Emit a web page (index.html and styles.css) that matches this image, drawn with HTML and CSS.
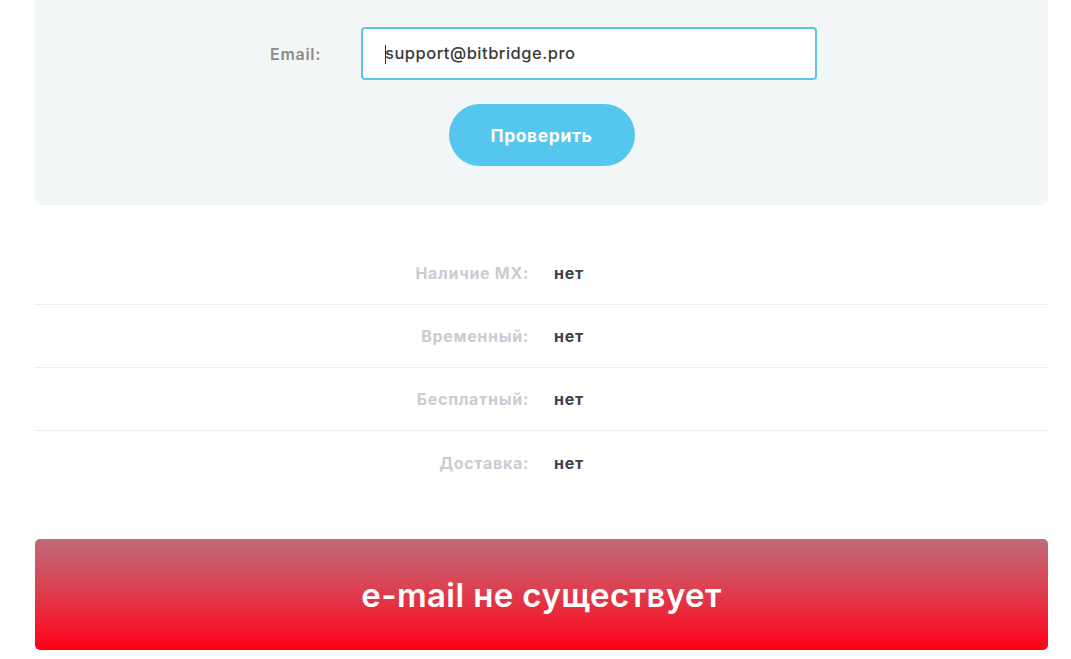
FILE: index.html
```html
<!DOCTYPE html>
<html lang="ru">
<head>
<meta charset="utf-8">
<title>Проверка email</title>
<link rel="stylesheet" href="styles.css">
</head>
<body>
<div class="page">
  <section class="panel">
    <form class="check-form">
      <div class="field">
        <label class="field-label" for="email">Email:</label>
        <div class="input-box"><span class="caret"></span><input id="email" class="field-input" type="text" value="support@bitbridge.pro"></div>
      </div>
      <button type="button" class="btn">Проверить</button>
    </form>
  </section>

  <section class="results">
    <div class="row"><span class="r-label">Наличие MX:</span><span class="r-value">нет</span></div>
    <div class="row"><span class="r-label">Временный:</span><span class="r-value">нет</span></div>
    <div class="row"><span class="r-label">Бесплатный:</span><span class="r-value">нет</span></div>
    <div class="row"><span class="r-label">Доставка:</span><span class="r-value">нет</span></div>
  </section>

  <div class="verdict">e-mail не существует</div>
</div>
</body>
</html>
```
FILE: styles.css
```css
* { box-sizing: border-box; }
html, body { margin: 0; padding: 0; background: #fff; }
body { font-family: Inter, "Open Sans", "Liberation Sans", sans-serif; }

.page {
  width: 1013px;
  margin-left: 35px;
}

.panel {
  background: #f2f6f7;
  border-radius: 0 0 7px 7px;
  height: 205px;
  padding-top: 27px;
}

.check-form {
  display: flex;
  flex-direction: column;
  align-items: center;
}

.field {
  align-self: stretch;
  display: flex;
  align-items: center;
  gap: 40px;
}

.field-label {
  width: 286px;
  text-align: right;
  color: #8c8c8c;
  font-size: 16px;
  font-weight: 600;
  letter-spacing: 0.7px;
}

.input-box {
  position: relative;
  width: 456px;
  height: 53px;
  border: 2px solid #5ec4e6;
  border-radius: 4px;
  background: #fff;
}

.field-input {
  width: 100%;
  height: 100%;
  border: 0;
  outline: none;
  background: transparent;
  padding: 0 0 2px 22px;
  font-family: inherit;
  font-size: 16.5px;
  font-weight: 500;
  letter-spacing: 0.5px;
  color: #3a3a3a;
}

.caret {
  position: absolute;
  left: 22px;
  top: 16px;
  width: 1px;
  height: 19px;
  background: #333;
}

.btn {
  margin-top: 24px;
  width: 186px;
  height: 62px;
  border: 0;
  border-radius: 31px;
  background: #55c6ed;
  color: #fff;
  font-family: inherit;
  font-size: 17.5px;
  font-weight: 700;
  letter-spacing: 0.6px;
  cursor: pointer;
}

.results {
  margin-top: 37px;
}

.row {
  display: grid;
  grid-template-columns: 494px 1fr;
  column-gap: 25px;
  align-items: center;
  height: 63px;
  border-bottom: 1px solid #eeeeee;
  font-size: 16px;
  font-weight: 700;
  letter-spacing: 0.7px;
}
.row:last-child { border-bottom: 0; }

.r-label { text-align: right; color: #c9cdd1; }
.r-value { color: #3b3f46; }

.verdict {
  margin-top: 45px;
  height: 111px;
  border-radius: 5px;
  background: linear-gradient(to bottom, #c06b79 0%, #d94656 40%, #ff0016 100%);
  color: #fff;
  display: flex;
  align-items: center;
  justify-content: center;
  font-size: 33px;
  font-weight: 600;
  letter-spacing: 0.4px;
}
```
